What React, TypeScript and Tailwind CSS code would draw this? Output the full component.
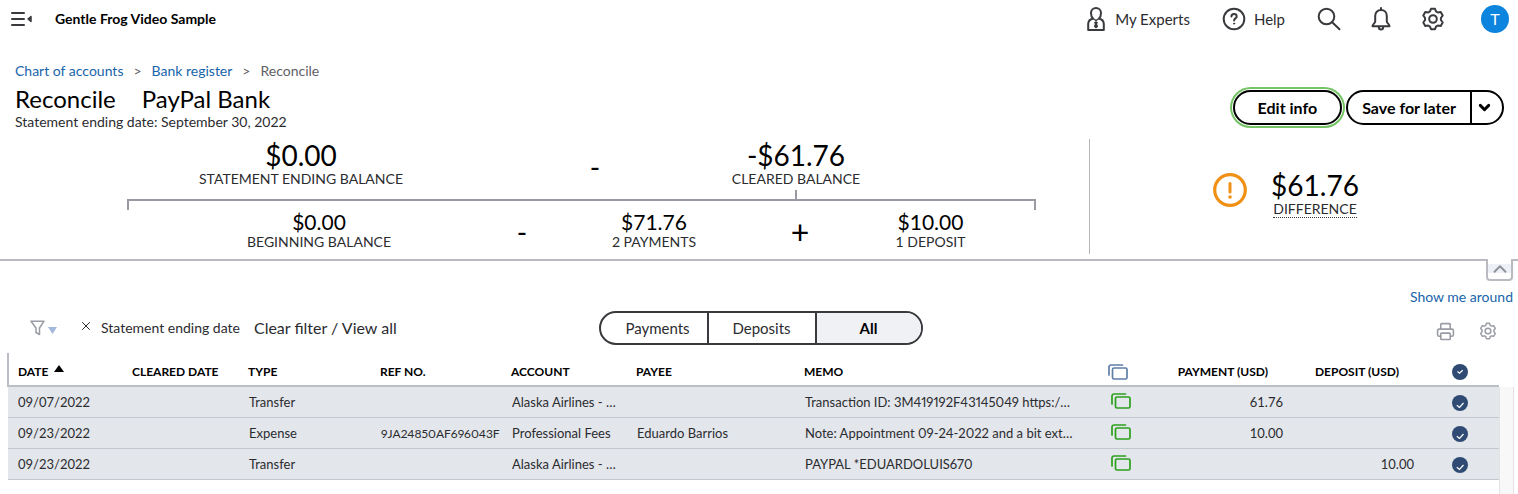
import { useState } from 'react';
import { ChevronDown, ChevronUp, Printer, X } from 'lucide-react';
import clsx from 'clsx';

interface Transaction {
  id: number;
  date: string;
  type: string;
  refNo?: string;
  account: string;
  payee?: string;
  memo: string;
  payment?: string;
  deposit?: string;
}

const transactions: Transaction[] = [
  { id: 1, date: '09/07/2022', type: 'Transfer', account: 'Alaska Airlines - …', memo: 'Transaction ID: 3M419192F43145049 https:/…', payment: '61.76' },
  { id: 2, date: '09/23/2022', type: 'Expense', refNo: '9JA24850AF696043F', account: 'Professional Fees', payee: 'Eduardo Barrios', memo: 'Note: Appointment 09-24-2022 and a bit ext…', payment: '10.00' },
  { id: 3, date: '09/23/2022', type: 'Transfer', account: 'Alaska Airlines - …', memo: 'PAYPAL *EDUARDOLUIS670', deposit: '10.00' },
];

const tabs = ['Payments', 'Deposits', 'All'];

function MenuIcon() {
  return (
    <svg width="22" height="16" viewBox="0 0 22 16" fill="none" stroke="#393a3d" strokeWidth="2" strokeLinecap="round">
      <path d="M1 2h12M1 8h12M1 14h12" />
      <path d="M20 5.5v5L17 8z" fill="#393a3d" strokeWidth="1.5" strokeLinejoin="round" />
    </svg>
  );
}

function ExpertIcon() {
  return (
    <svg width="18" height="26" viewBox="0 0 18 26" fill="none" stroke="#393a3d" strokeWidth="2" strokeLinejoin="round">
      <path d="M6 12.500C4.400 11 4 9 4 7a5 5 0 0 1 10 0c0 2-.4 4-2 5.500 3 .8 4.800 2.500 4.800 5.500v6H1.200v-6c0-3 1.800-4.700 4.800-5.500z" />
      <path d="M6 12.500l3 2 3-2" strokeWidth="1.500" />
      <path d="M9 15l2 1.600-.9 1.400L11.200 20.500 9 22.500l-2.200-2L7.900 18 7 16.600z" fill="#393a3d" stroke="none" />
    </svg>
  );
}

function HelpIcon() {
  return (
    <svg width="24" height="24" viewBox="0 0 24 24" fill="none" stroke="#393a3d" strokeWidth="2" strokeLinecap="round">
      <circle cx="12" cy="12" r="10.300" />
      <path d="M9.400 9.600c0-1.500 1.100-2.500 2.600-2.500s2.700 1 2.700 2.400c0 1.900-2.600 1.900-2.600 3.900" />
      <circle cx="12.100" cy="16.600" r=".6" fill="#393a3d" strokeWidth="1" />
    </svg>
  );
}

function SearchIcon() {
  return (
    <svg width="24" height="24" viewBox="0 0 24 24" fill="none" stroke="#393a3d" strokeWidth="2" strokeLinecap="round">
      <circle cx="9.500" cy="9.500" r="7.800" />
      <path d="M15.200 15.200l7.300 7" />
    </svg>
  );
}

function BellIcon() {
  return (
    <svg width="20" height="26" viewBox="0 0 20 26" fill="none" stroke="#393a3d" strokeWidth="2" strokeLinecap="round" strokeLinejoin="round">
      <path d="M10 2v2M10 4c-3.600 0-5.800 2.600-5.800 6v5.500c0 1.500-2.700 2.500-2.700 4.800h17c0-2.300-2.700-3.300-2.700-4.800V10c0-3.400-2.200-6-5.800-6z" />
      <path d="M7.800 21c0 1.600.9 2.600 2.200 2.600s2.200-1 2.200-2.600" />
    </svg>
  );
}

function GearIcon({ size, color }: { size: number; color: string }) {
  return (
    <svg width={size} height={size} viewBox="0 0 24 24" fill="none" stroke={color} strokeWidth="2" strokeLinejoin="round">
      <path d="M10 1.800h4l1 2.600 1.800 1.100 2.900-.5 2 3.500L19.900 11v2l1.800 2.500-2 3.500-2.900-.5-1.800 1.100-1 2.600h-4l-1-2.600-1.800-1.100-2.900.5-2-3.500L4.100 13v-2L2.300 8.500l2-3.500 2.900.5L9 4.400z" />
      <circle cx="12" cy="12" r="3.800" />
    </svg>
  );
}

function FilterIcon() {
  return (
    <svg width="27" height="16" viewBox="0 0 27 16" fill="none">
      <path d="M1 1.200h13L9.500 8v6.500L6 12.500V8z" stroke="#9a9ca5" strokeWidth="1.500" strokeLinejoin="round" />
      <path d="M18 7h9l-4.500 7z" fill="#a3b9dc" />
    </svg>
  );
}

function AlertIcon() {
  return (
    <svg className="mb-2" width="34" height="34" viewBox="0 0 34 34" fill="none">
      <circle cx="17" cy="17" r="15.300" stroke="#f09015" strokeWidth="3.200" />
      <path d="M17 10.500v8.500" stroke="#f09015" strokeWidth="3" strokeLinecap="round" />
      <circle cx="17" cy="24" r="1.800" fill="#f09015" />
    </svg>
  );
}

function BankedIcon({ color }: { color: string }) {
  return (
    <svg width="20" height="16" viewBox="0 0 20 16" fill="none" stroke={color} strokeWidth="1.700" strokeLinecap="round">
      <path d="M1 11V3a2 2 0 0 1 2-2h11.500" />
      <rect x="4.500" y="4" width="14.500" height="11" rx="1.500" />
    </svg>
  );
}

function CheckIcon({ small = false }: { small?: boolean }) {
  return (
    <svg width="16" height="16" viewBox="0 0 16 16" fill="none">
      <circle cx="8" cy="8" r="8" fill="#2f4b73" />
      <path d={small ? 'M5.500 7.500l2 1.800 3.200-3' : 'M4.800 10.200l2.700 2.300 4-4.500'} stroke="#fff" strokeWidth="1.200" />
    </svg>
  );
}

function Amount({ value, label, large = false }: { value: string; label: string; large?: boolean }) {
  return (
    <div className="flex flex-col items-center whitespace-nowrap">
      <span className={clsx('text-black', large ? 'text-[28px] leading-8' : 'text-[21px] leading-6')}>{value}</span>
      <span className="text-sm leading-4">{label}</span>
    </div>
  );
}

function TopBar() {
  return (
    <header className="flex h-[38px] items-center justify-between pr-[9px] pl-[11px]">
      <div className="flex items-center gap-[22px]">
        <button aria-label="Collapse menu"><MenuIcon /></button>
        <span className="text-sm font-bold text-black">Gentle Frog Video Sample</span>
      </div>
      <div className="flex items-center text-[15px]">
        <button className="flex items-center gap-[10px]"><ExpertIcon />My Experts</button>
        <button className="ml-8 flex items-center gap-2"><HelpIcon />Help</button>
        <button aria-label="Search" className="ml-8"><SearchIcon /></button>
        <button aria-label="Notifications" className="ml-[30px]"><BellIcon /></button>
        <button aria-label="Settings" className="ml-[30px]"><GearIcon size={24} color="#393a3d" /></button>
        <button aria-label="Account" className="ml-9 h-7 w-7 rounded-full bg-[#0d84dd] text-base text-white">T</button>
      </div>
    </header>
  );
}

function PageHeading() {
  return (
    <div className="flex items-end justify-between pt-6 pr-[14px] pl-[15px]">
      <div>
        <nav aria-label="Breadcrumb" className="flex gap-[10px] text-sm leading-[18px] text-[#5f6064]">
          <a href="#accounts" className="text-[#1864ab]">Chart of accounts</a>
          <span>&gt;</span>
          <a href="#register" className="text-[#1864ab]">Bank register</a>
          <span>&gt;</span>
          <span>Reconcile</span>
        </nav>
        <h1 className="mt-1 flex gap-[26px] text-2xl leading-[30px] text-black">
          <span>Reconcile</span>
          <span>PayPal Bank</span>
        </h1>
        <p className="text-sm leading-4">Statement ending date: September 30, 2022</p>
      </div>
      <div className="mb-[5px] flex gap-1 text-base font-bold text-black">
        <button className="h-[35px] rounded-full border-2 border-black px-[23px] ring-2 ring-[#74c365] ring-offset-1">Edit info</button>
        <div className="flex h-[35px] rounded-full border-2 border-black">
          <button className="px-[14px]">Save for later</button>
          <button aria-label="More save options" className="flex w-8 items-center border-l-2 border-black pl-1">
            <ChevronDown size={17} strokeWidth={4} />
          </button>
        </div>
      </div>
    </div>
  );
}

function Summary() {
  return (
    <section className="mt-[9px] flex border-b-2 border-[#b9bbc0] pb-[5px]">
      <div className="flex-1 border-r border-[#b4b5ba] pr-[53px] pl-[127px]">
        <div className="grid grid-cols-[348fr_240fr_162fr_159fr] justify-items-center">
          <Amount large value="$0.00" label="STATEMENT ENDING BALANCE" />
          <span className="mt-3 text-[28px] leading-8 text-black">-</span>
          <div className="flex flex-col items-center">
            <Amount large value="-$61.76" label="CLEARED BALANCE" />
            <div className="mt-[3px] h-[9px] w-[2px] bg-[#9a9ba2]" />
          </div>
        </div>
        <div className="h-[11px] border-x-2 border-t-2 border-[#9a9ba2]" />
        <div className="grid grid-cols-[384fr_22fr_242fr_50fr_211fr] items-start justify-items-center">
          <Amount value="$0.00" label="BEGINNING BALANCE" />
          <span className="text-[28px] leading-[44px] text-black">-</span>
          <Amount value="$71.76" label="2 PAYMENTS" />
          <span className="text-[32px] leading-[44px] text-black">+</span>
          <Amount value="$10.00" label="1 DEPOSIT" />
        </div>
      </div>
      <div className="flex w-[428px] items-center justify-center gap-6 pr-9 pb-[6px]">
        <AlertIcon />
        <div className="flex flex-col items-center">
          <span className="text-[28px] leading-8 text-black">$61.76</span>
          <button className="border-b border-dotted border-[#393a3d] text-sm leading-4">DIFFERENCE</button>
        </div>
      </div>
    </section>
  );
}

function FilterBar() {
  const [tab, setTab] = useState('All');

  return (
    <div className="grid grid-cols-[1fr_324px_1fr] items-center pt-[5px] pb-2 pl-[3px]">
      <div className="flex items-center pl-[27px]">
        <button aria-label="Filter"><FilterIcon /></button>
        <button aria-label="Remove filter" className="ml-[22px] pb-1"><X size={14} strokeWidth={1.7} /></button>
        <span className="ml-2 text-sm">Statement ending date</span>
        <button className="ml-[14px] text-base">Clear filter / View all</button>
      </div>
      <div className="grid h-[34px] grid-cols-[106fr_108fr_106fr] overflow-hidden rounded-full border-2 border-[#393a3d] text-[15px]">
        {tabs.map((name) => (
          <button
            key={name}
            onClick={() => setTab(name)}
            className={clsx(
              'border-[#393a3d] first:pl-2 not-first:border-l-2',
              tab === name && 'bg-[#f0f1f5] font-bold text-black'
            )}
          >
            {name}
          </button>
        ))}
      </div>
      <div className="flex items-center justify-end gap-6 pt-[6px] pr-[21px] text-[#9a9ca5]">
        <button aria-label="Print"><Printer size={19} strokeWidth={2} /></button>
        <button aria-label="Table settings"><GearIcon size={18} color="#9a9ca5" /></button>
      </div>
    </div>
  );
}

function TransactionTable() {
  return (
    <div className="flex flex-1 pr-1 pl-[7px]">
      <table className="w-full table-fixed self-start border-collapse text-left text-[13px] whitespace-nowrap">
        <colgroup>
          <col className="w-[114px]" />
          <col className="w-[116px]" />
          <col className="w-[132px]" />
          <col className="w-[131px]" />
          <col className="w-[125px]" />
          <col className="w-[168px]" />
          <col />
          <col className="w-[60px]" />
          <col className="w-[142px]" />
          <col className="w-[131px]" />
          <col className="w-[75px]" />
        </colgroup>
        <thead>
          <tr className="h-[33px] border-b-2 border-[#babec5] text-xs text-black *:pt-[6px]">
            <th className="border-l-2 border-[#babec5] pl-[9px]">
              <span className="flex items-center gap-[6px]">
                DATE
                <svg width="10" height="14" viewBox="0 0 10 14"><path d="M5 0l5 7H0z" /></svg>
              </span>
            </th>
            <th className="pl-[10px]">CLEARED DATE</th>
            <th className="pl-[10px]">TYPE</th>
            <th className="pl-[10px]">REF NO.</th>
            <th className="pl-[10px]">ACCOUNT</th>
            <th className="pl-[10px]">PAYEE</th>
            <th className="pl-[10px]">MEMO</th>
            <th aria-label="Banking match" className="pl-[17px]"><BankedIcon color="#5f7fa8" /></th>
            <th className="pr-[25px] text-right">PAYMENT (USD)</th>
            <th className="pr-[25px] text-right">DEPOSIT (USD)</th>
            <th aria-label="Cleared" className="pl-[28px]"><CheckIcon small /></th>
          </tr>
        </thead>
        <tbody>
          {transactions.map((row) => (
            <tr key={row.id} className="h-[31px] border-b border-[#c3c7ce] bg-[#e3e6eb] *:pt-0.5">
              <td className="pl-[10px]">{row.date}</td>
              <td />
              <td className="pl-[11px]">{row.type}</td>
              <td className="pl-[11px] text-xs proportional-nums">{row.refNo}</td>
              <td className="pl-[11px]">{row.account}</td>
              <td className="pl-[11px]">{row.payee}</td>
              <td className="pl-[11px] proportional-nums">{row.memo}</td>
              <td className="pb-1 pl-5"><BankedIcon color="#2ca01c" /></td>
              <td className="pr-[10px] text-right">{row.payment}</td>
              <td className="pr-[10px] text-right">{row.deposit}</td>
              <td className="pl-[28px]"><CheckIcon /></td>
            </tr>
          ))}
        </tbody>
      </table>
      {/* Scrollbar track */}
      <div className="mt-[34px] w-[15px] shrink-0 border-x border-[#e4e4e6] bg-[#f8f8f8]" />
    </div>
  );
}

export default function App() {
  return (
    <div className="flex min-h-screen flex-col bg-white font-['Lato','Liberation_Sans',sans-serif] text-[#2b2c2f]">
      <TopBar />
      <PageHeading />
      <Summary />
      <div className="-mt-[2px] flex flex-col items-end pr-[5px]">
        <button
          aria-label="Collapse summary"
          className="flex h-[22px] w-[27px] justify-center rounded-b-sm border-2 border-t-0 border-[#b9bbc0] bg-white pt-[1px] text-[#8d9096]"
        >
          <span className="mt-1 flex h-[9px] w-full items-center justify-center bg-[#edf0f7]">
            <ChevronUp size={22} className="shrink-0" />
          </span>
        </button>
        <a href="#tour" className="mt-[7px] text-sm leading-[18px] text-[#1864ab]">Show me around</a>
      </div>
      <FilterBar />
      <TransactionTable />
    </div>
  );
}
